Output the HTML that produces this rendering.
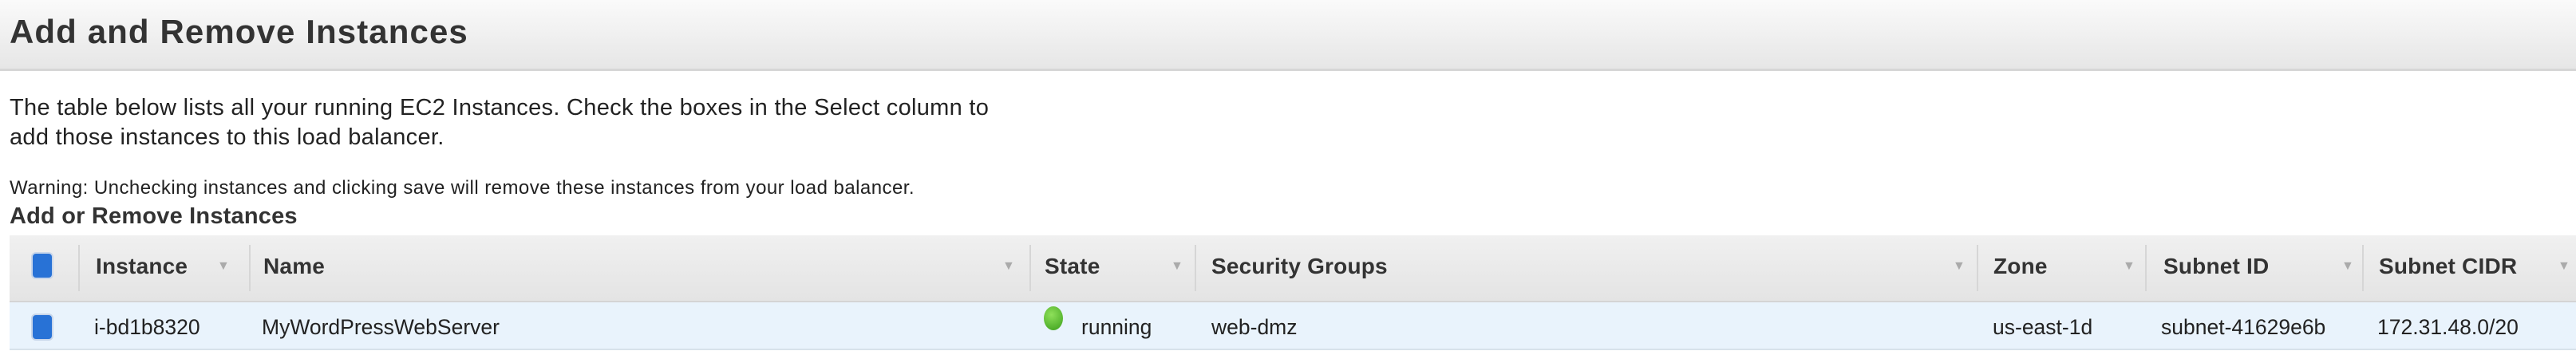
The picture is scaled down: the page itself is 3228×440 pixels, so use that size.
<!DOCTYPE html>
<html><head><style>
body{margin:0;width:3228px;height:440px;overflow:hidden;background:#fff;font-family:"Liberation Sans",Arial,sans-serif;color:#222;position:relative}
.a{position:absolute;white-space:nowrap}
#hdr{position:absolute;left:0;top:0;width:3228px;height:86px;background:linear-gradient(#fafafa,#e6e6e6);border-bottom:3px solid #d6d6d6}
#th{position:absolute;left:12px;top:295px;width:3216px;height:82px;background:linear-gradient(#f0f0f0,#e4e4e4);border-bottom:2px solid #d4d4d4}
#tr{position:absolute;left:12px;top:379px;width:3216px;height:58px;background:#e9f3fc;border-bottom:2px solid #d8e2ea}
.h{font-size:28px;font-weight:bold;color:#333;top:318px;letter-spacing:0.2px}
.r{font-size:26.5px;color:#222;top:395px}
.ar{font-size:16px;color:#aaa;top:325px}
.sep{position:absolute;top:307px;width:2px;height:58px;background:#d6d6d6}
.cb{position:absolute;width:24px;height:30px;background:#2872d6;border-radius:6px;border:2px solid #c8d6ea}
</style></head><body>
<div id="hdr"></div>
<div class="a" style="left:12px;top:16px;font-size:42px;font-weight:bold;color:#333;letter-spacing:1.1px">Add and Remove Instances</div>
<div class="a" style="left:12px;top:117px;font-size:29px;line-height:37px;letter-spacing:0.3px">The table below lists all your running EC2 Instances. Check the boxes in the Select column to<br>add those instances to this load balancer.</div>
<div class="a" style="left:12px;top:222px;font-size:24px;letter-spacing:0.45px">Warning: Unchecking instances and clicking save will remove these instances from your load balancer.</div>
<div class="a" style="left:12px;top:255px;font-size:29px;font-weight:bold;color:#333;letter-spacing:0.2px">Add or Remove Instances</div>
<div id="th"></div><div id="tr"></div>
<div class="cb" style="left:39px;top:316px"></div>
<div class="cb" style="left:39px;top:393px"></div>
<div class="sep" style="left:98px"></div><div class="sep" style="left:312px"></div><div class="sep" style="left:1290px"></div><div class="sep" style="left:1497px"></div><div class="sep" style="left:2477px"></div><div class="sep" style="left:2688px"></div><div class="sep" style="left:2960px"></div>
<div class="a h" style="left:120px">Instance</div><div class="a ar" style="left:272px">▼</div>
<div class="a h" style="left:330px">Name</div><div class="a ar" style="left:1256px">▼</div>
<div class="a h" style="left:1309px">State</div><div class="a ar" style="left:1467px">▼</div>
<div class="a h" style="left:1518px">Security Groups</div><div class="a ar" style="left:2447px">▼</div>
<div class="a h" style="left:2498px">Zone</div><div class="a ar" style="left:2660px">▼</div>
<div class="a h" style="left:2711px">Subnet ID</div><div class="a ar" style="left:2934px">▼</div>
<div class="a h" style="left:2981px">Subnet CIDR</div><div class="a ar" style="left:3205px">▼</div>
<div class="a r" style="left:118px">i-bd1b8320</div>
<div class="a r" style="left:328px">MyWordPressWebServer</div>
<div class="a" style="left:1308px;top:384px;width:24px;height:30px;border-radius:50%;background:radial-gradient(circle at 40% 35%,#8ee05a,#3a9e1a)"></div>
<div class="a r" style="left:1355px">running</div>
<div class="a r" style="left:1518px">web-dmz</div>
<div class="a r" style="left:2497px">us-east-1d</div>
<div class="a r" style="left:2708px">subnet-41629e6b</div>
<div class="a r" style="left:2979px">172.31.48.0/20</div>
</body></html>
